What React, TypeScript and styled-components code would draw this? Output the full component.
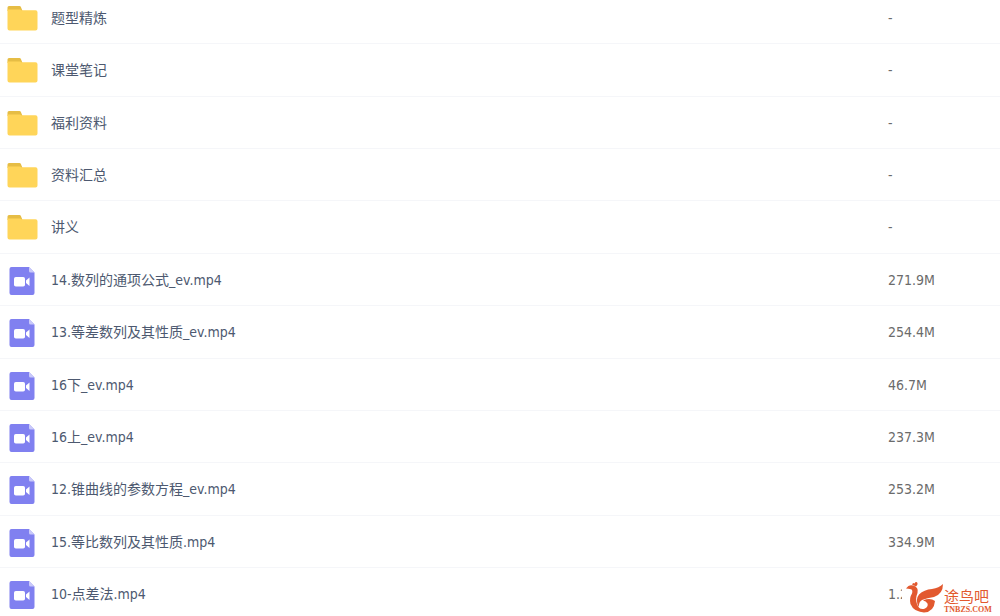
import React from "react";
import styled, { createGlobalStyle } from "styled-components";

const Global = createGlobalStyle`
  * { box-sizing: border-box; }
  body { margin: 0; background: #fff; }
`;

const Page = styled.main`
  height: 100vh;
  overflow: hidden;
  font-family: "DejaVu Sans Condensed", "Noto Sans CJK SC", sans-serif;
  font-size: 14px;
  line-height: 20px;
`;

const FileTable = styled.table`
  width: 100%;
  margin-top: -8px;
  border-collapse: separate;
  border-spacing: 0;
  table-layout: fixed;
`;

const Row = styled.tr`
  height: 52px;
  &:nth-child(5n),
  &:nth-child(5n + 2) {
    height: 53px;
  }
`;

const Cell = styled.td`
  padding: 0;
  border-bottom: 1px solid #f5f6f9;
  vertical-align: middle;
`;

const SizeCell = styled(Cell)`
  width: 112px;
  color: #6b6b6b;
`;

const FileLink = styled.a`
  display: flex;
  align-items: center;
  gap: 13px;
  padding-left: 6px;
  color: #4d5970;
  text-decoration: none;
`;

const Icon = styled.svg`
  display: block;
  flex: none;
  width: 32px;
  height: 32px;
`;

const Watermark = styled.aside`
  position: fixed;
  right: 0;
  bottom: 0;
  display: flex;
  align-items: center;
  width: 98px;
  height: 38px;
  padding-left: 3px;
  background: #fff;
  color: #e2592f;
`;

const Bird = styled.svg`
  flex: none;
  width: 39px;
  height: 34px;
`;

const Brand = styled.div`
  display: flex;
  flex-direction: column;
  padding-top: 10px;
`;

const BrandName = styled.span`
  font: 15px/15px "Liberation Serif", "Noto Sans CJK SC", serif;
`;

const BrandSite = styled.span`
  font: bold 8px/10px "Liberation Serif", serif;
`;

const FolderIcon = () => (
  <Icon viewBox="0 0 32 32" aria-hidden="true">
    <path d="M3 4h10.500a1.500 1.500 0 0 1 1.300 .8L16.500 9H1.500V5.500A1.500 1.500 0 0 1 3 4z" fill="#e6bd45" />
    <path d="M1.500 7.500h12.500l1.500 .8h14a2 2 0 0 1 2 2v16.200a2 2 0 0 1-2 2h-26a2 2 0 0 1-2-2z" fill="#ffd559" />
  </Icon>
);

const VideoIcon = () => (
  <Icon viewBox="0 0 32 32" aria-hidden="true">
    <path d="M5.500 3H23l5.500 5.500V29a2 2 0 0 1-2 2h-21a2 2 0 0 1-2-2V5a2 2 0 0 1 2-2z" fill="#8080f0" />
    <path d="M23 3l5.500 5.500H24.500A1.500 1.500 0 0 1 23 7z" fill="#c9c9fa" />
    <rect x="8" y="13" width="11" height="9.500" rx="1.800" fill="#fff" />
    <path d="M20 16.500l3.500-3v8.500L20 19z" fill="#fff" />
  </Icon>
);

type Entry = { name: string; size: string; folder?: boolean };

const entries: Entry[] = [
  { name: "题型精炼", size: "-", folder: true },
  { name: "课堂笔记", size: "-", folder: true },
  { name: "福利资料", size: "-", folder: true },
  { name: "资料汇总", size: "-", folder: true },
  { name: "讲义", size: "-", folder: true },
  { name: "14.数列的通项公式_ev.mp4", size: "271.9M" },
  { name: "13.等差数列及其性质_ev.mp4", size: "254.4M" },
  { name: "16下_ev.mp4", size: "46.7M" },
  { name: "16上_ev.mp4", size: "237.3M" },
  { name: "12.锥曲线的参数方程_ev.mp4", size: "253.2M" },
  { name: "15.等比数列及其性质.mp4", size: "334.9M" },
  { name: "10-点差法.mp4", size: "1.2" },
];

export default function App() {
  return (
    <Page>
      <Global />
      <FileTable>
        <tbody>
          {entries.map((e) => (
            <Row key={e.name}>
              <Cell>
                <FileLink href="#">
                  {e.folder ? <FolderIcon /> : <VideoIcon />}
                  <span>{e.name}</span>
                </FileLink>
              </Cell>
              <SizeCell>{e.size}</SizeCell>
            </Row>
          ))}
        </tbody>
      </FileTable>
      <Watermark>
        <Bird viewBox="0 0 39 34" aria-hidden="true">
          <g fill="currentColor">
            <path d="M7 4.500Q8 2 9.500 3.500Q11 1 12.500 3Q13 4.500 11 6.500z" />
            <path d="M1 8.500Q4 4 8.500 5.500Q14 7.500 12.500 13Q10 19 12 24Q14 29.500 20 32Q9 32.500 5.500 24Q4 18 7 13.500Q8 10 6 9.200Q3 8.500 1 8.500z" />
            <path d="M38 4Q38 14 29 17Q22 18 17 20Q13.500 22 14 27Q9.500 20 14 14.500Q19 9.500 27 9Q34 8 38 4z" />
            <path d="M18 20.500Q25 17.500 30 21Q29 32 19 32.500Q13 32 12 27Q16 30 20 28.500Q23.500 26.500 22.500 23.500Q21 21 18 20.500z" />
          </g>
        </Bird>
        <Brand>
          <BrandName>途鸟吧</BrandName>
          <BrandSite>TNBZS.COM</BrandSite>
        </Brand>
      </Watermark>
    </Page>
  );
}
